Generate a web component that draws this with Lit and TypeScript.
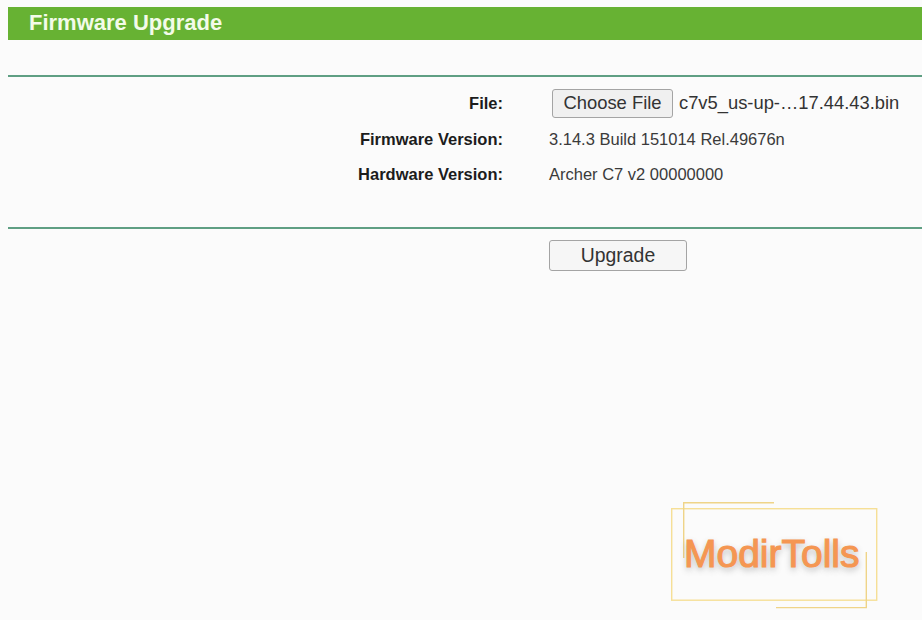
import { LitElement, html, css } from "lit";
import { customElement } from "lit/decorators.js";

@customElement("app-root")
export class AppRoot extends LitElement {
  static styles = css`
    :host {
      display: block;
      position: relative;
      height: 620px;
      overflow: hidden;
      background: #fbfbfb;
      font-family: "Liberation Sans", Arial, sans-serif;
      color: #2a2a2a;
    }
    .page {
      padding: 7px 0 0 8px;
    }
    .title {
      height: 33px;
      background: #67b233;
      color: #f3fbe9;
      font-size: 22px;
      font-weight: 700;
      line-height: 32px;
      padding-left: 21px;
    }
    .rule {
      height: 2px;
      background: #5f9f83;
    }
    .rule.top {
      margin-top: 35px;
    }
    .form {
      display: grid;
      grid-template-columns: 495px 1fr;
      grid-template-rows: 36px 36px 35px;
      column-gap: 46px;
      align-items: center;
      padding: 8px 0 18px;
      height: 150px;
      box-sizing: border-box;
      align-content: start;
    }
    .label {
      text-align: right;
      font-size: 16.5px;
      font-weight: 700;
      color: #1c1c1c;
    }
    .value {
      font-size: 16.5px;
      color: #3a3a3a;
      white-space: nowrap;
    }
    .file {
      display: flex;
      align-items: center;
      gap: 6px;
      padding-left: 3px;
      font-size: 18.35px;
      color: #333;
    }
    button {
      font-family: inherit;
      box-sizing: border-box;
      background: #f0f0f0;
      border: 1px solid #a4a4a4;
      border-radius: 3px;
      color: #333;
      padding: 0;
    }
    .choose {
      width: 121px;
      height: 29px;
      font-size: 18.4px;
    }
    .actions {
      padding: 11px 0 0 541px;
    }
    .upgrade {
      width: 138px;
      height: 31px;
      padding-bottom: 1px;
      font-size: 19.4px;
      background: #f6f6f6;
    }
    .mark {
      position: absolute;
      left: 671px;
      top: 502px;
      width: 207px;
      height: 107px;
    }
    .mark svg {
      position: absolute;
      inset: 0;
      width: 100%;
      height: 100%;
    }
    .mark-text {
      position: absolute;
      left: 13px;
      top: 30px;
      font-size: 39px;
      line-height: 44px;
      color: #f59652;
      -webkit-text-stroke: 1.1px #f59652;
      text-shadow: 0 3px 6px rgba(90, 90, 90, 0.45);
      white-space: nowrap;
    }
  `;

  render() {
    return html`
      <div class="page">
        <div class="title">Firmware Upgrade</div>
        <div class="rule top"></div>
        <div class="form">
          <div class="label">File:</div>
          <div class="file">
            <button class="choose">Choose File</button>
            <span>c7v5_us-up-…17.44.43.bin</span>
          </div>
          <div class="label">Firmware Version:</div>
          <div class="value">3.14.3 Build 151014 Rel.49676n</div>
          <div class="label">Hardware Version:</div>
          <div class="value">Archer C7 v2 00000000</div>
        </div>
        <div class="rule"></div>
        <div class="actions">
          <button class="upgrade">Upgrade</button>
        </div>
      </div>
      <div class="mark">
        <svg viewBox="0 0 207 107" fill="none" stroke-width="1.4">
          <rect x="0.7" y="6.7" width="205" height="91.5" stroke="#f6df96"></rect>
          <path d="M103 0.7H12.7V56" stroke="#efd488"></path>
          <path d="M195.3 50V105.6H105" stroke="#efd488"></path>
        </svg>
        <div class="mark-text">ModirTolls</div>
      </div>
    `;
  }
}
